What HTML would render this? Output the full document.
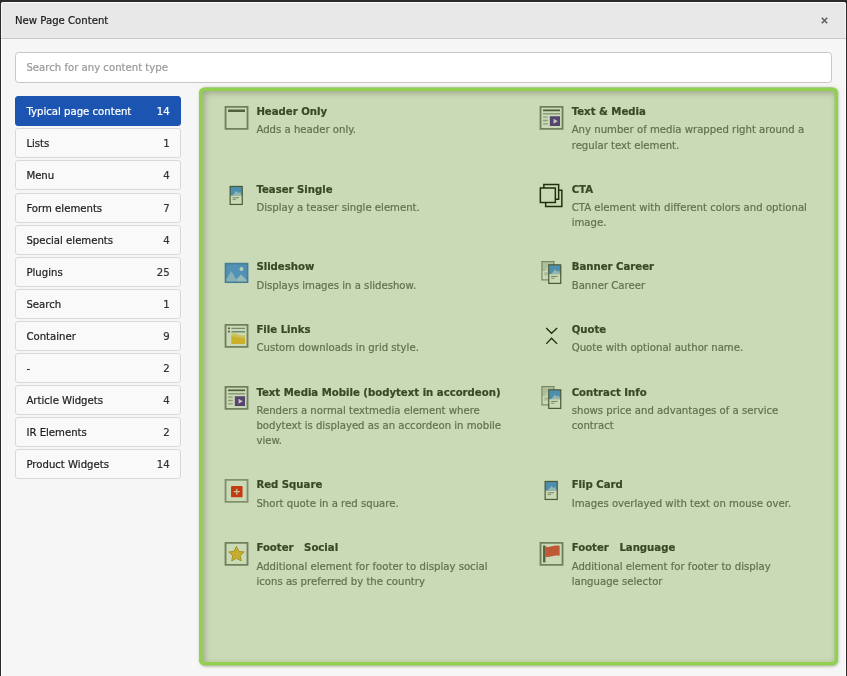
<!DOCTYPE html>
<html lang="en">
<head>
<meta charset="utf-8">
<title>New Page Content</title>
<style>
*{box-sizing:border-box;margin:0;padding:0}
html,body{width:847px;height:676px;overflow:hidden;background:#2a2a2a}
body{position:relative;font-family:"DejaVu Sans","Liberation Sans",sans-serif;font-size:10.15px;color:#1f1f1f}
.modal{position:absolute;left:1px;top:2px;width:845px;height:690px;background:#f6f6f6;border-radius:3px 3px 0 0;overflow:hidden;box-shadow:inset 1px 0 0 #fff,inset -1px 0 0 #fff}
.mhead{position:absolute;left:0;top:0;width:100%;height:36.5px;background:#e8e8e8;border-bottom:1px solid #c9c9c9;border-top:1px solid #fbfbfb;box-shadow:inset 1px 0 0 #f6f6f6,inset -1px 0 0 #f6f6f6}
.mtitle{position:absolute;left:14px;top:10.6px;font-size:10.15px;line-height:13px;color:#1c1c1c;white-space:nowrap}
.close{position:absolute;left:820.2px;top:13.7px;width:7px;height:7px}
.search{position:absolute;left:14px;top:50.2px;width:817px;height:30.6px;background:#fff;border:1px solid #c6c6c6;border-radius:3.5px}
.search span{position:absolute;left:10.4px;top:8px;line-height:13px;color:#999;white-space:nowrap}
.nav{position:absolute;left:14px;top:94.2px;width:166px;list-style:none}
.nav li{position:relative;height:30px;margin-bottom:2.12px;border:1px solid #d8d8d8;border-radius:3px;background:#f9f9f9;line-height:13px;white-space:nowrap}
.nav li span{position:absolute;left:10.4px;top:8px}
.nav li b{position:absolute;right:10.4px;top:8px;font-weight:normal;color:#333}
.nav li.act{background:#1b55b1;border-color:#1b55b1;color:#fff}
.nav li.act b{color:#fff}
.panel{position:absolute;left:198px;top:85px;width:639px;height:578px;background:#fff;border-radius:6px;transform:translate(0,.4px)}
.ov{position:absolute;left:0;top:0;width:100%;height:100%;border-radius:6px;background:rgba(73,126,0,.286);box-shadow:inset 0 0 0 3.5px #92d050,inset 2px 2px 6px 3.5px rgba(0,0,0,.24),1px 1px 2.5px rgba(0,0,0,.14),0 0 3px rgba(146,208,80,.4)}
.it{position:absolute;width:300px}
.it svg{position:absolute;left:0;top:0;width:27.07px;height:27.07px;overflow:visible}
.it h3{position:absolute;left:33.8px;top:1.2px;font-size:10.15px;line-height:13px;font-weight:bold;color:#343434;white-space:nowrap}
.it p{position:absolute;left:33.8px;top:18.6px;font-size:10.15px;line-height:15.1px;color:#6e6e6e;white-space:nowrap}
.mtitle,.search span,.nav li span,.nav li b,.it h3,.it p{filter:grayscale(1);-webkit-text-stroke:.22px currentColor}
</style>
</head>
<body>
<div class="modal">
  <div class="mhead">
    <div class="mtitle">New Page Content</div>
    <svg class="close" viewBox="0 0 7 7"><path d="M0.8 0.8L6.2 6.2M6.2 0.8L0.8 6.2" stroke="#606060" stroke-width="1.6" fill="none"/></svg>
  </div>
  <div class="search"><span>Search for any content type</span></div>
  <ul class="nav">
    <li class="act"><span>Typical page content</span><b>14</b></li>
    <li><span>Lists</span><b>1</b></li>
    <li><span>Menu</span><b>4</b></li>
    <li><span>Form elements</span><b>7</b></li>
    <li><span>Special elements</span><b>4</b></li>
    <li><span>Plugins</span><b>25</b></li>
    <li><span>Search</span><b>1</b></li>
    <li><span>Container</span><b>9</b></li>
    <li><span>-</span><b>2</b></li>
    <li><span>Article Widgets</span><b>4</b></li>
    <li><span>IR Elements</span><b>2</b></li>
    <li><span>Product Widgets</span><b>14</b></li>
  </ul>
  <div class="panel">
    <!-- ITEMS -->
    <div class="it" style="left:23.60px;top:16.90px"><svg viewBox="0 0 16 16"><path fill="#828282" d="M.95.95v14.1h14.1V.95H.95zM13.95 13.95H2.05V2.05h11.9v11.9z"/><path fill="#565656" d="M3 3h10v1.5H3z"/></svg><h3>Header Only</h3><p>Adds a header only.</p></div>
    <div class="it" style="left:23.60px;top:94.55px"><svg viewBox="0 0 27.07 27.07"><g opacity="1"><rect x="6.55" y="3.45" width="13.3" height="19.2" fill="#4c4c4c"/><rect x="7.75" y="4.65" width="10.90" height="8.45" fill="#4f96f5"/><rect x="7.75" y="13.10" width="10.90" height="8.35" fill="#fff"/><path fill="#fff" opacity=".55" d="M9.75 13.10l3.6 -4.6l2.2 2.2l1.6 -1.2l1.4 3.6z"/><rect x="9.55" y="14.90" width="6.5" height="1" fill="#888"/><rect x="9.55" y="16.70" width="3.4" height="1" fill="#999"/></g></svg><h3>Teaser Single</h3><p>Display a teaser single element.</p></div>
    <div class="it" style="left:23.60px;top:172.20px"><svg viewBox="0 0 16 16"><path fill="#59f" d="M1 2h14v12H1z"/><path opacity=".17" d="M14 3v10H2V3h12m1-1H1v12h14V2z"/><path fill="#fff" opacity=".42" d="M2 13V11.6L4.9 6.9 8.7 13z"/><path fill="#fff" opacity=".55" d="M7.9 11.9l2.7-3L14 12.2V13H8.7z"/><circle fill="#e8fbff" opacity=".9" cx="10.9" cy="5.7" r="1.15"/></svg><h3>Slideshow</h3><p>Displays images in a slideshow.</p></div>
    <div class="it" style="left:23.60px;top:234.90px"><svg viewBox="0 0 16 16"><path fill="#828282" d="M.95.95v14.1h14.1V.95H.95zM13.95 13.95H2.05V2.05h11.9v11.9z"/><path fill="#4a4a4a" d="M3 3h1v1H3zM3 5h1v1H3z"/><path fill="#8a8f99" d="M5 3.1h8v.8H5zM5 5.1h8v.8H5z"/><path fill="#ffdd85" d="M5 6.6h3.2l1.2 1H13v5.2H5z"/><path fill="#ffc53e" d="M5 8.3c3 0 4 .9 8 .9v3.6H5z"/></svg><h3>File Links</h3><p>Custom downloads in grid style.</p></div>
    <div class="it" style="left:23.60px;top:297.40px"><svg viewBox="0 0 16 16"><path fill="#828282" d="M.95.95v14.1h14.1V.95H.95zM13.95 13.95H2.05V2.05h11.9v11.9z"/><path fill="#505050" d="M3 3h10v1H3z"/><path fill="#a8a8a8" d="M3 5.1h10v.8H3zM3 7.1h2.8v.8H3zM3 9.1h2.8v.8H3zM3 11.1h2.8v.8H3z"/><path fill="#5a2d9e" d="M7 7h6v5.8H7z"/><path fill="#f4e8ff" d="M9.2 8.5v2.9l2.5-1.45z"/></svg><h3>Text Media Mobile (bodytext in accordeon)</h3><p>Renders a normal textmedia element where<br>bodytext is displayed as an accordeon in mobile<br>view.</p></div>
    <div class="it" style="left:23.60px;top:390.10px"><svg viewBox="0 0 16 16"><path fill="#999" d="M.95.95v14.1h14.1V.95H.95zM13.95 13.95H2.05V2.05h11.9v11.9z"/><rect x="4.75" y="5.05" width="6.8" height="6.75" rx=".7" fill="#f5201a"/><path stroke="#ffe9e0" stroke-width=".7" d="M8.15 6.7v3.5M6.4 8.45h3.5"/></svg><h3>Red Square</h3><p>Short quote in a red square.</p></div>
    <div class="it" style="left:23.60px;top:453.10px"><svg viewBox="0 0 16 16"><path fill="#828282" d="M.95.95v14.1h14.1V.95H.95zM13.95 13.95H2.05V2.05h11.9v11.9z"/><path transform="translate(7.95 8) scale(.93) translate(-8 -8)" fill="#f7c046" stroke="#c4962a" stroke-width=".55" stroke-linejoin="round" d="M8 3.2l1.5 3.1 3.4.45-2.5 2.35.62 3.35L8 10.8l-3.02 1.65.62-3.35L3.1 6.75l3.4-.45z"/></svg><h3>Footer   Social</h3><p>Additional element for footer to display social<br>icons as preferred by the country</p></div>
    <div class="it" style="left:338.90px;top:16.90px"><svg viewBox="0 0 16 16"><path fill="#828282" d="M.95.95v14.1h14.1V.95H.95zM13.95 13.95H2.05V2.05h11.9v11.9z"/><path fill="#505050" d="M3 3h10v1H3z"/><path fill="#a8a8a8" d="M3 5.1h10v.8H3zM3 7.1h2.8v.8H3zM3 9.1h2.8v.8H3zM3 11.1h2.8v.8H3z"/><path fill="#5a2d9e" d="M7 7h6v5.8H7z"/><path fill="#f4e8ff" d="M9.2 8.5v2.9l2.5-1.45z"/></svg><h3>Text &amp; Media</h3><p>Any number of media wrapped right around a<br>regular text element.</p></div>
    <div class="it" style="left:338.90px;top:94.55px"><svg viewBox="0 0 27.07 27.07"><g fill="none" stroke="#111" stroke-width="1.5" stroke-linejoin="miter"><rect x="2.35" y="5.6" width="15" height="14.5"/><path d="M5.85 5.6V2.1h14.8v14.7h-3.3"/><path d="M7.65 20.1v3.9h16.2V7.8h-3.2"/></g></svg><h3>CTA</h3><p>CTA element with different colors and optional<br>image.</p></div>
    <div class="it" style="left:338.90px;top:172.20px"><svg viewBox="0 0 27.07 27.07"><g opacity="0.62"><rect x="3.35" y="1.6" width="13.2" height="19.5" fill="#4c4c4c"/><rect x="4.55" y="2.80" width="10.80" height="8.58" fill="#b8c4c8"/><rect x="4.55" y="11.38" width="10.80" height="8.52" fill="#fff"/><path fill="#fff" opacity=".55" d="M6.55 11.38l3.6 -4.6l2.2 2.2l1.6 -1.2l1.4 3.6z"/><rect x="6.35" y="13.18" width="6.5" height="1" fill="#888"/><rect x="6.35" y="14.98" width="3.4" height="1" fill="#999"/></g><g opacity="1"><rect x="10.15" y="4.8" width="13.2" height="19.8" fill="#4c4c4c"/><rect x="11.35" y="6.00" width="10.80" height="8.71" fill="#4f96f5"/><rect x="11.35" y="14.71" width="10.80" height="8.69" fill="#fff"/><path fill="#fff" opacity=".55" d="M13.35 14.71l3.6 -4.6l2.2 2.2l1.6 -1.2l1.4 3.6z"/><rect x="13.15" y="16.51" width="6.5" height="1" fill="#888"/><rect x="13.15" y="18.31" width="3.4" height="1" fill="#999"/></g></svg><h3>Banner Career</h3><p>Banner Career</p></div>
    <div class="it" style="left:338.90px;top:234.90px"><svg viewBox="0 0 27.07 27.07"><path fill="none" stroke="#111" stroke-width="1.35" d="M8.25 5.6l5.3 5.3l5.6 -5.3M8.25 21.5l5.3 -5.6l5.6 5.6"/></svg><h3>Quote</h3><p>Quote with optional author name.</p></div>
    <div class="it" style="left:338.90px;top:297.40px"><svg viewBox="0 0 27.07 27.07"><g opacity="0.62"><rect x="3.35" y="1.6" width="13.2" height="19.5" fill="#4c4c4c"/><rect x="4.55" y="2.80" width="10.80" height="8.58" fill="#b8c4c8"/><rect x="4.55" y="11.38" width="10.80" height="8.52" fill="#fff"/><path fill="#fff" opacity=".55" d="M6.55 11.38l3.6 -4.6l2.2 2.2l1.6 -1.2l1.4 3.6z"/><rect x="6.35" y="13.18" width="6.5" height="1" fill="#888"/><rect x="6.35" y="14.98" width="3.4" height="1" fill="#999"/></g><g opacity="1"><rect x="10.15" y="4.8" width="13.2" height="19.8" fill="#4c4c4c"/><rect x="11.35" y="6.00" width="10.80" height="8.71" fill="#4f96f5"/><rect x="11.35" y="14.71" width="10.80" height="8.69" fill="#fff"/><path fill="#fff" opacity=".55" d="M13.35 14.71l3.6 -4.6l2.2 2.2l1.6 -1.2l1.4 3.6z"/><rect x="13.15" y="16.51" width="6.5" height="1" fill="#888"/><rect x="13.15" y="18.31" width="3.4" height="1" fill="#999"/></g></svg><h3>Contract Info</h3><p>shows price and advantages of a service<br>contract</p></div>
    <div class="it" style="left:338.90px;top:390.10px"><svg viewBox="0 0 27.07 27.07"><g opacity="1"><rect x="6.55" y="3.45" width="13.3" height="19.2" fill="#4c4c4c"/><rect x="7.75" y="4.65" width="10.90" height="8.45" fill="#4f96f5"/><rect x="7.75" y="13.10" width="10.90" height="8.35" fill="#fff"/><path fill="#fff" opacity=".55" d="M9.75 13.10l3.6 -4.6l2.2 2.2l1.6 -1.2l1.4 3.6z"/><rect x="9.55" y="14.90" width="6.5" height="1" fill="#888"/><rect x="9.55" y="16.70" width="3.4" height="1" fill="#999"/></g></svg><h3>Flip Card</h3><p>Images overlayed with text on mouse over.</p></div>
    <div class="it" style="left:338.90px;top:453.10px"><svg viewBox="0 0 16 16"><path fill="#828282" d="M.95.95v14.1h14.1V.95H.95zM13.95 13.95H2.05V2.05h11.9v11.9z"/><path fill="#565656" d="M3 3h1.4v10H3z"/><path fill="#ee4a4e" d="M4.3 3.5c2.2 1.2 4.9-1.3 8.5-.3v5.9c-3.6-1-6.3 1.6-8.5.4z"/></svg><h3>Footer   Language</h3><p>Additional element for footer to display<br>language selector</p></div>
    <!-- /ITEMS -->
    <div class="ov"></div>
  </div>
</div>
</body>
</html>
